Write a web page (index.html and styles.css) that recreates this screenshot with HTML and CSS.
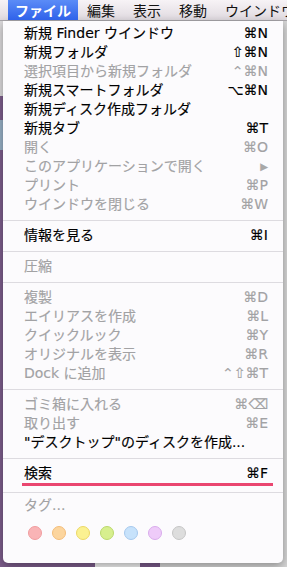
FILE: index.html
```html
<!DOCTYPE html>
<html>
  <head>
    <title>ファイル</title>
    <link rel="stylesheet" href="styles.css">
  </head>
  <body>
    <div class="menubar">
      <span class="title active">ファイル</span>
      <span class="title">編集</span>
      <span class="title">表示</span>
      <span class="title">移動</span>
      <span class="title">ウインドウ</span>
    </div>

    <div class="menu">
      <div class="item"><span>新規 Finder ウインドウ</span><span class="key">⌘N</span></div>
      <div class="item"><span>新規フォルダ</span><span class="key">⇧⌘N</span></div>
      <div class="item off"><span>選択項目から新規フォルダ</span><span class="key">⌃⌘N</span></div>
      <div class="item"><span>新規スマートフォルダ</span><span class="key">⌥⌘N</span></div>
      <div class="item"><span>新規ディスク作成フォルダ</span></div>
      <div class="item"><span>新規タブ</span><span class="key">⌘T</span></div>
      <div class="item off"><span>開く</span><span class="key">⌘O</span></div>
      <div class="item off"><span>このアプリケーションで開く</span><span class="arrow">▶</span></div>
      <div class="item off"><span>プリント</span><span class="key">⌘P</span></div>
      <div class="item off"><span>ウインドウを閉じる</span><span class="key">⌘W</span></div>
      <div class="sep"></div>
      <div class="item"><span>情報を見る</span><span class="key">⌘I</span></div>
      <div class="sep"></div>
      <div class="item off"><span>圧縮</span></div>
      <div class="sep"></div>
      <div class="item off"><span>複製</span><span class="key">⌘D</span></div>
      <div class="item off"><span>エイリアスを作成</span><span class="key">⌘L</span></div>
      <div class="item off"><span>クイックルック</span><span class="key">⌘Y</span></div>
      <div class="item off"><span>オリジナルを表示</span><span class="key">⌘R</span></div>
      <div class="item off"><span>Dock に追加</span><span class="key">⌃⇧⌘T</span></div>
      <div class="sep"></div>
      <div class="item off"><span>ゴミ箱に入れる</span><span class="key">⌘⌫</span></div>
      <div class="item off"><span>取り出す</span><span class="key">⌘E</span></div>
      <div class="item"><span>"デスクトップ"のディスクを作成...</span></div>
      <div class="sep"></div>
      <div class="item marked"><span>検索</span><span class="key">⌘F</span></div>
      <div class="sep"></div>
      <div class="item off tags-label"><span>タグ...</span></div>
      <div class="tags">
        <span class="dot red"></span>
        <span class="dot orange"></span>
        <span class="dot yellow"></span>
        <span class="dot green"></span>
        <span class="dot blue"></span>
        <span class="dot purple"></span>
        <span class="dot gray"></span>
      </div>
    </div>
  </body>
</html>
```

FILE: styles.css
```css
body {
  margin: 0;
  padding: 0;
  height: 567px;
  overflow: hidden;
  font-family: "DejaVu Sans", "Noto Sans CJK JP", sans-serif;
  background:
    linear-gradient(#dcdadc, #dcdadc) 0 21px / 3px 75px no-repeat,
    linear-gradient(#98b0c6, #98b0c6) 0 120px / 3px 30px no-repeat,
    linear-gradient(
      to right,
      #7d5d8c 0,
      #7d5d8c 95px,
      #f2f2f2 95px,
      #f2f2f2 140px,
      #7a5a8a 140px,
      #7a5a8a 160px,
      #d6d6d6 160px
    );
}

.menubar {
  display: flex;
  height: 20px;
  padding-left: 8px;
  overflow: hidden;
  white-space: nowrap;
  background: linear-gradient(#f7f3f6, #e0dae0);
  border-bottom: 1px solid #a9a6ab;
}

.menubar .title {
  flex-shrink: 0;
  padding: 0 9px;
  font-family: "Noto Sans CJK JP", sans-serif;
  font-size: 14px;
  line-height: 20px;
  color: #111;
}

.menubar .title.active {
  padding: 0 7px;
  color: #fff;
  font-weight: bold;
  background: linear-gradient(#5b8cf7, #2f62ea);
}

.menu {
  margin: 0 4px 0 3px;
  padding: 3px 0 23px;
  background: #fcfbfd;
  border-radius: 0 0 5px 5px;
  box-shadow: 0 3px 10px rgba(0, 0, 0, 0.35);
}

.item {
  display: flex;
  justify-content: space-between;
  align-items: center;
  height: 19px;
  padding: 0 15px 0 21px;
  font-size: 14px;
  line-height: 19px;
  color: #000;
  white-space: nowrap;
  -webkit-text-stroke: 0.15px currentColor;
}

.item.off {
  color: #a2a2a4;
}

.item .key {
  font-family: "DejaVu Sans", sans-serif;
  font-size: 14px;
}

.item .arrow {
  font-size: 10px;
  color: #a8a8a8;
}

.item.marked {
  margin: 0 10px 0 19px;
  padding: 0 5px 0 2px;
  border-bottom: 3px solid #ea4670;
}

.sep {
  height: 1px;
  margin: 6px 0 5px;
  background: #dddbe0;
}

.tags-label {
  margin-top: -2px;
}

.tags {
  display: flex;
  gap: 10px;
  padding-left: 25px;
  margin-top: 11px;
}

.dot {
  width: 12px;
  height: 12px;
  border-radius: 50%;
  border: 1px solid;
}

.red { background: #f9b4b6; border-color: #f19c9f; }
.orange { background: #fcd59e; border-color: #f4bd7a; }
.yellow { background: #fbf191; border-color: #ecd866; }
.green { background: #d7ef8e; border-color: #bbd96c; }
.blue { background: #c7e2fb; border-color: #a6c9ee; }
.purple { background: #eecbf9; border-color: #d9abec; }
.gray { background: #dddddd; border-color: #c6c6c6; }
```
